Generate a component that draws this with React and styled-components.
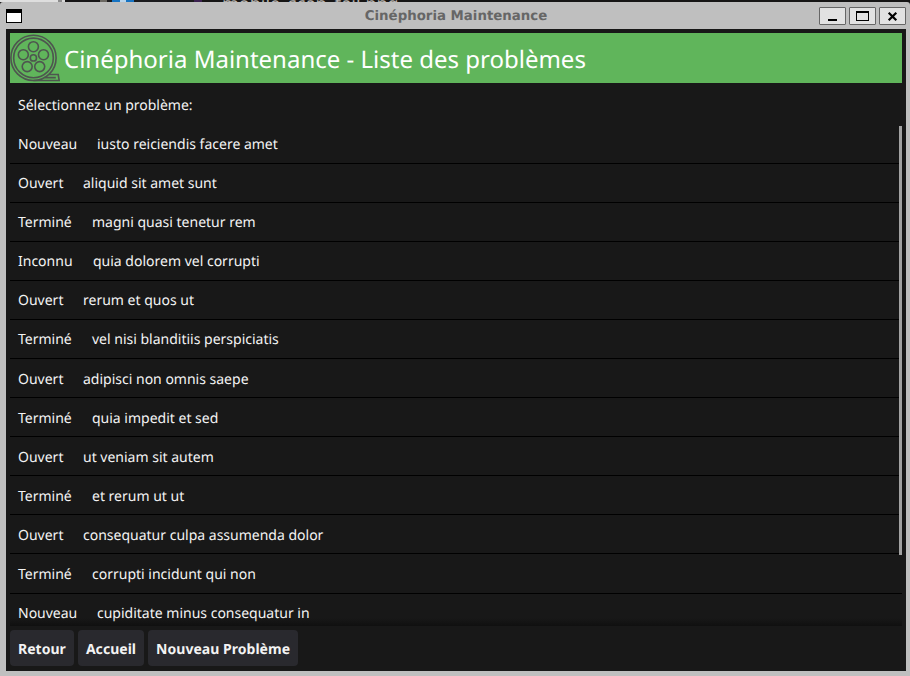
import React from "react";
import styled, { createGlobalStyle } from "styled-components";

const GlobalStyle = createGlobalStyle`
  * { box-sizing: border-box; }
  body { margin: 0; background: #161515; overflow: hidden; text-rendering: geometricPrecision; }
`;

const Desktop = styled.div`
  width: 910px;
  height: 676px;
  display: flex;
  flex-direction: column;
  background: #161515;
  overflow: hidden;
`;

const BackdropStrip = styled.div`
  flex: 0 0 2px;
  height: 2px;
  display: flex;
  overflow: hidden;
`;

const BackdropPart = styled.div`
  flex: 0 0 ${(p) => p.$w}px;
  height: 2px;
  background: ${(p) => p.$c};
`;

const BackdropFile = styled.div`
  height: 2px;
  padding-left: 20px;
  font: 18px/18px "Noto Sans", sans-serif;
  color: #b9b4b0;
  white-space: pre;

  span {
    display: block;
    margin-top: -5px;
  }
`;

const Window = styled.main`
  flex: 1;
  display: flex;
  flex-direction: column;
  padding: 0 4px 5px 6px;
  background: #bfbfbf;
  border-radius: 3px 3px 0 0;
`;

const TitleBar = styled.header`
  flex: 0 0 27px;
  display: grid;
  grid-template-columns: 90px 1fr 90px;
  align-items: center;
`;

const WindowIcon = styled.span`
  width: 16px;
  height: 14px;
  margin-top: 1px;
  background: #fff;
  border: 1px solid #000;
  border-top-width: 4px;
`;

const WindowTitle = styled.h1`
  margin: 0;
  padding-top: 2px;
  text-align: center;
  font: bold 13.33px/16px "DejaVu Sans", sans-serif;
  color: #666;
  white-space: nowrap;
`;

const WindowControls = styled.div`
  display: flex;
  justify-content: flex-end;
  gap: 3px;
  margin-top: 1px;
`;

const ControlButton = styled.button`
  width: 27px;
  height: 18px;
  padding: 0;
  border: 1px solid #666;
  border-radius: 1px;
  background: #e2e2e2;

  svg { display: block; }
`;

const Client = styled.div`
  flex: 1;
  min-height: 0;
  display: flex;
  flex-direction: column;
  padding: 4px;
  background: #181818;
  color: #f3f3f3;
  font: 14px/19px "Noto Sans", sans-serif;
`;

const Banner = styled.div`
  flex: 0 0 50px;
  display: flex;
  align-items: center;
  gap: 4px;
  background: #60b55b;
  color: #fff;
`;

const BannerTitle = styled.h2`
  margin: 0;
  padding-top: 3px;
  font: 400 24px/33px "Noto Sans", sans-serif;
  white-space: nowrap;
`;

const Prompt = styled.p`
  flex: 0 0 43px;
  margin: 0;
  padding: 13px 8px 11px;
`;

const ListArea = styled.section`
  flex: 0 0 500px;
  position: relative;
  overflow: hidden;
`;

const Rows = styled.div`
  margin-top: -1.4px;
`;

const ProblemRow = styled.div`
  height: 39.09px;
  display: flex;
  gap: 20px;
  padding: 10.48px 8px 0;
  border-bottom: 1px solid #000;
  white-space: nowrap;
`;

const Status = styled.span`
  flex: 0 0 ${(p) => p.$width}px;
  min-width: 0;
`;

const ScrollThumb = styled.div`
  position: absolute;
  top: 0;
  right: 0;
  width: 3px;
  height: 429px;
  background: #a2a2a2;
`;

const ScrollShade = styled.div`
  position: absolute;
  inset: auto 0 0;
  height: 8px;
  background: linear-gradient(transparent, rgba(0, 0, 0, 0.35));
`;

const ActionBar = styled.footer`
  display: flex;
  gap: 4px;
  padding-top: 4px;
`;

const ActionButton = styled.button`
  height: 36px;
  padding: 2px 8px 0;
  border: 0;
  border-radius: 4px;
  background: #29292e;
  color: #f3f3f3;
  font: bold 14px/19px "Noto Sans", sans-serif;
  letter-spacing: 0.03px;
  text-rendering: inherit;
  white-space: nowrap;
`;

const statusWidths = { Nouveau: 59, Ouvert: 45, Terminé: 54, Inconnu: 55 };

const problems = [
  ["Nouveau", "iusto reiciendis facere amet"],
  ["Ouvert", "aliquid sit amet sunt"],
  ["Terminé", "magni quasi tenetur rem"],
  ["Inconnu", "quia dolorem vel corrupti"],
  ["Ouvert", "rerum et quos ut"],
  ["Terminé", "vel nisi blanditiis perspiciatis"],
  ["Ouvert", "adipisci non omnis saepe"],
  ["Terminé", "quia impedit et sed"],
  ["Ouvert", "ut veniam sit autem"],
  ["Terminé", "et rerum ut ut"],
  ["Ouvert", "consequatur culpa assumenda dolor"],
  ["Terminé", "corrupti incidunt qui non"],
  ["Nouveau", "cupiditate minus consequatur in"],
];

const FilmReel = () => (
  <svg width="50" height="50" viewBox="0 0 50 50" fill="none" stroke="#4e554f" strokeWidth="1.6">
    <circle cx="23.5" cy="24.9" r="22.6" />
    <circle cx="23.5" cy="24.9" r="19.8" />
    <circle cx="23.4" cy="24.9" r="3.1" />
    <circle cx="23.4" cy="13.7" r="5" />
    <circle cx="33.5" cy="21.7" r="5" />
    <circle cx="29.7" cy="33.6" r="5" />
    <circle cx="17.2" cy="33.6" r="5" />
    <circle cx="13.3" cy="21.7" r="5" />
    <path d="M23.5 47.5H49.2L48.2 41.5H39M34.5 44.6H45.8" />
  </svg>
);

export default function App() {
  return (
    <>
      <GlobalStyle />
      <Desktop>
        <BackdropStrip>
          <BackdropPart $w={58} $c="#dedede" />
          <BackdropPart $w={4} $c="#8c8c8c" />
          <BackdropPart $w={3} $c="#d8d8d8" />
          <BackdropPart $w={35} $c="#151415" />
          <BackdropPart $w={7} $c="#6b6862" />
          <BackdropPart $w={5} $c="#1b1b1d" />
          <BackdropPart $w={8} $c="#1673c2" />
          <BackdropPart $w={6} $c="#b8d4ea" />
          <BackdropPart $w={8} $c="#1673c2" />
          <BackdropPart $w={60} $c="#1b1b1d" />
          <BackdropPart $w={8} $c="#3b2150" />
          <BackdropFile><span>mobile_scan_tail.png</span></BackdropFile>
        </BackdropStrip>
        <Window>
          <TitleBar>
            <WindowIcon />
            <WindowTitle>Cinéphoria Maintenance</WindowTitle>
            <WindowControls>
              <ControlButton aria-label="Réduire">
                <svg width="25" height="16"><path d="M8 11h9v2H8z" /></svg>
              </ControlButton>
              <ControlButton aria-label="Agrandir">
                <svg width="25" height="16"><path fillRule="evenodd" d="M6 3h13v10H6zM7 5v7h11V5z" /></svg>
              </ControlButton>
              <ControlButton aria-label="Fermer">
                <svg width="25" height="16"><path d="M8.7 4.7l7.6 7.6M16.3 4.7l-7.6 7.6" stroke="#000" strokeWidth="2.2" /></svg>
              </ControlButton>
            </WindowControls>
          </TitleBar>
          <Client>
            <Banner>
              <FilmReel />
              <BannerTitle>Cinéphoria Maintenance - Liste des problèmes</BannerTitle>
            </Banner>
            <Prompt>Sélectionnez un problème:</Prompt>
            <ListArea>
              <Rows>
                {problems.map(([status, label], i) => (
                  <ProblemRow key={i}>
                    <Status $width={statusWidths[status]}>{status}</Status>
                    <span>{label}</span>
                  </ProblemRow>
                ))}
              </Rows>
              <ScrollThumb />
              <ScrollShade />
            </ListArea>
            <ActionBar>
              <ActionButton>Retour</ActionButton>
              <ActionButton>Accueil</ActionButton>
              <ActionButton>Nouveau Problème</ActionButton>
            </ActionBar>
          </Client>
        </Window>
      </Desktop>
    </>
  );
}
